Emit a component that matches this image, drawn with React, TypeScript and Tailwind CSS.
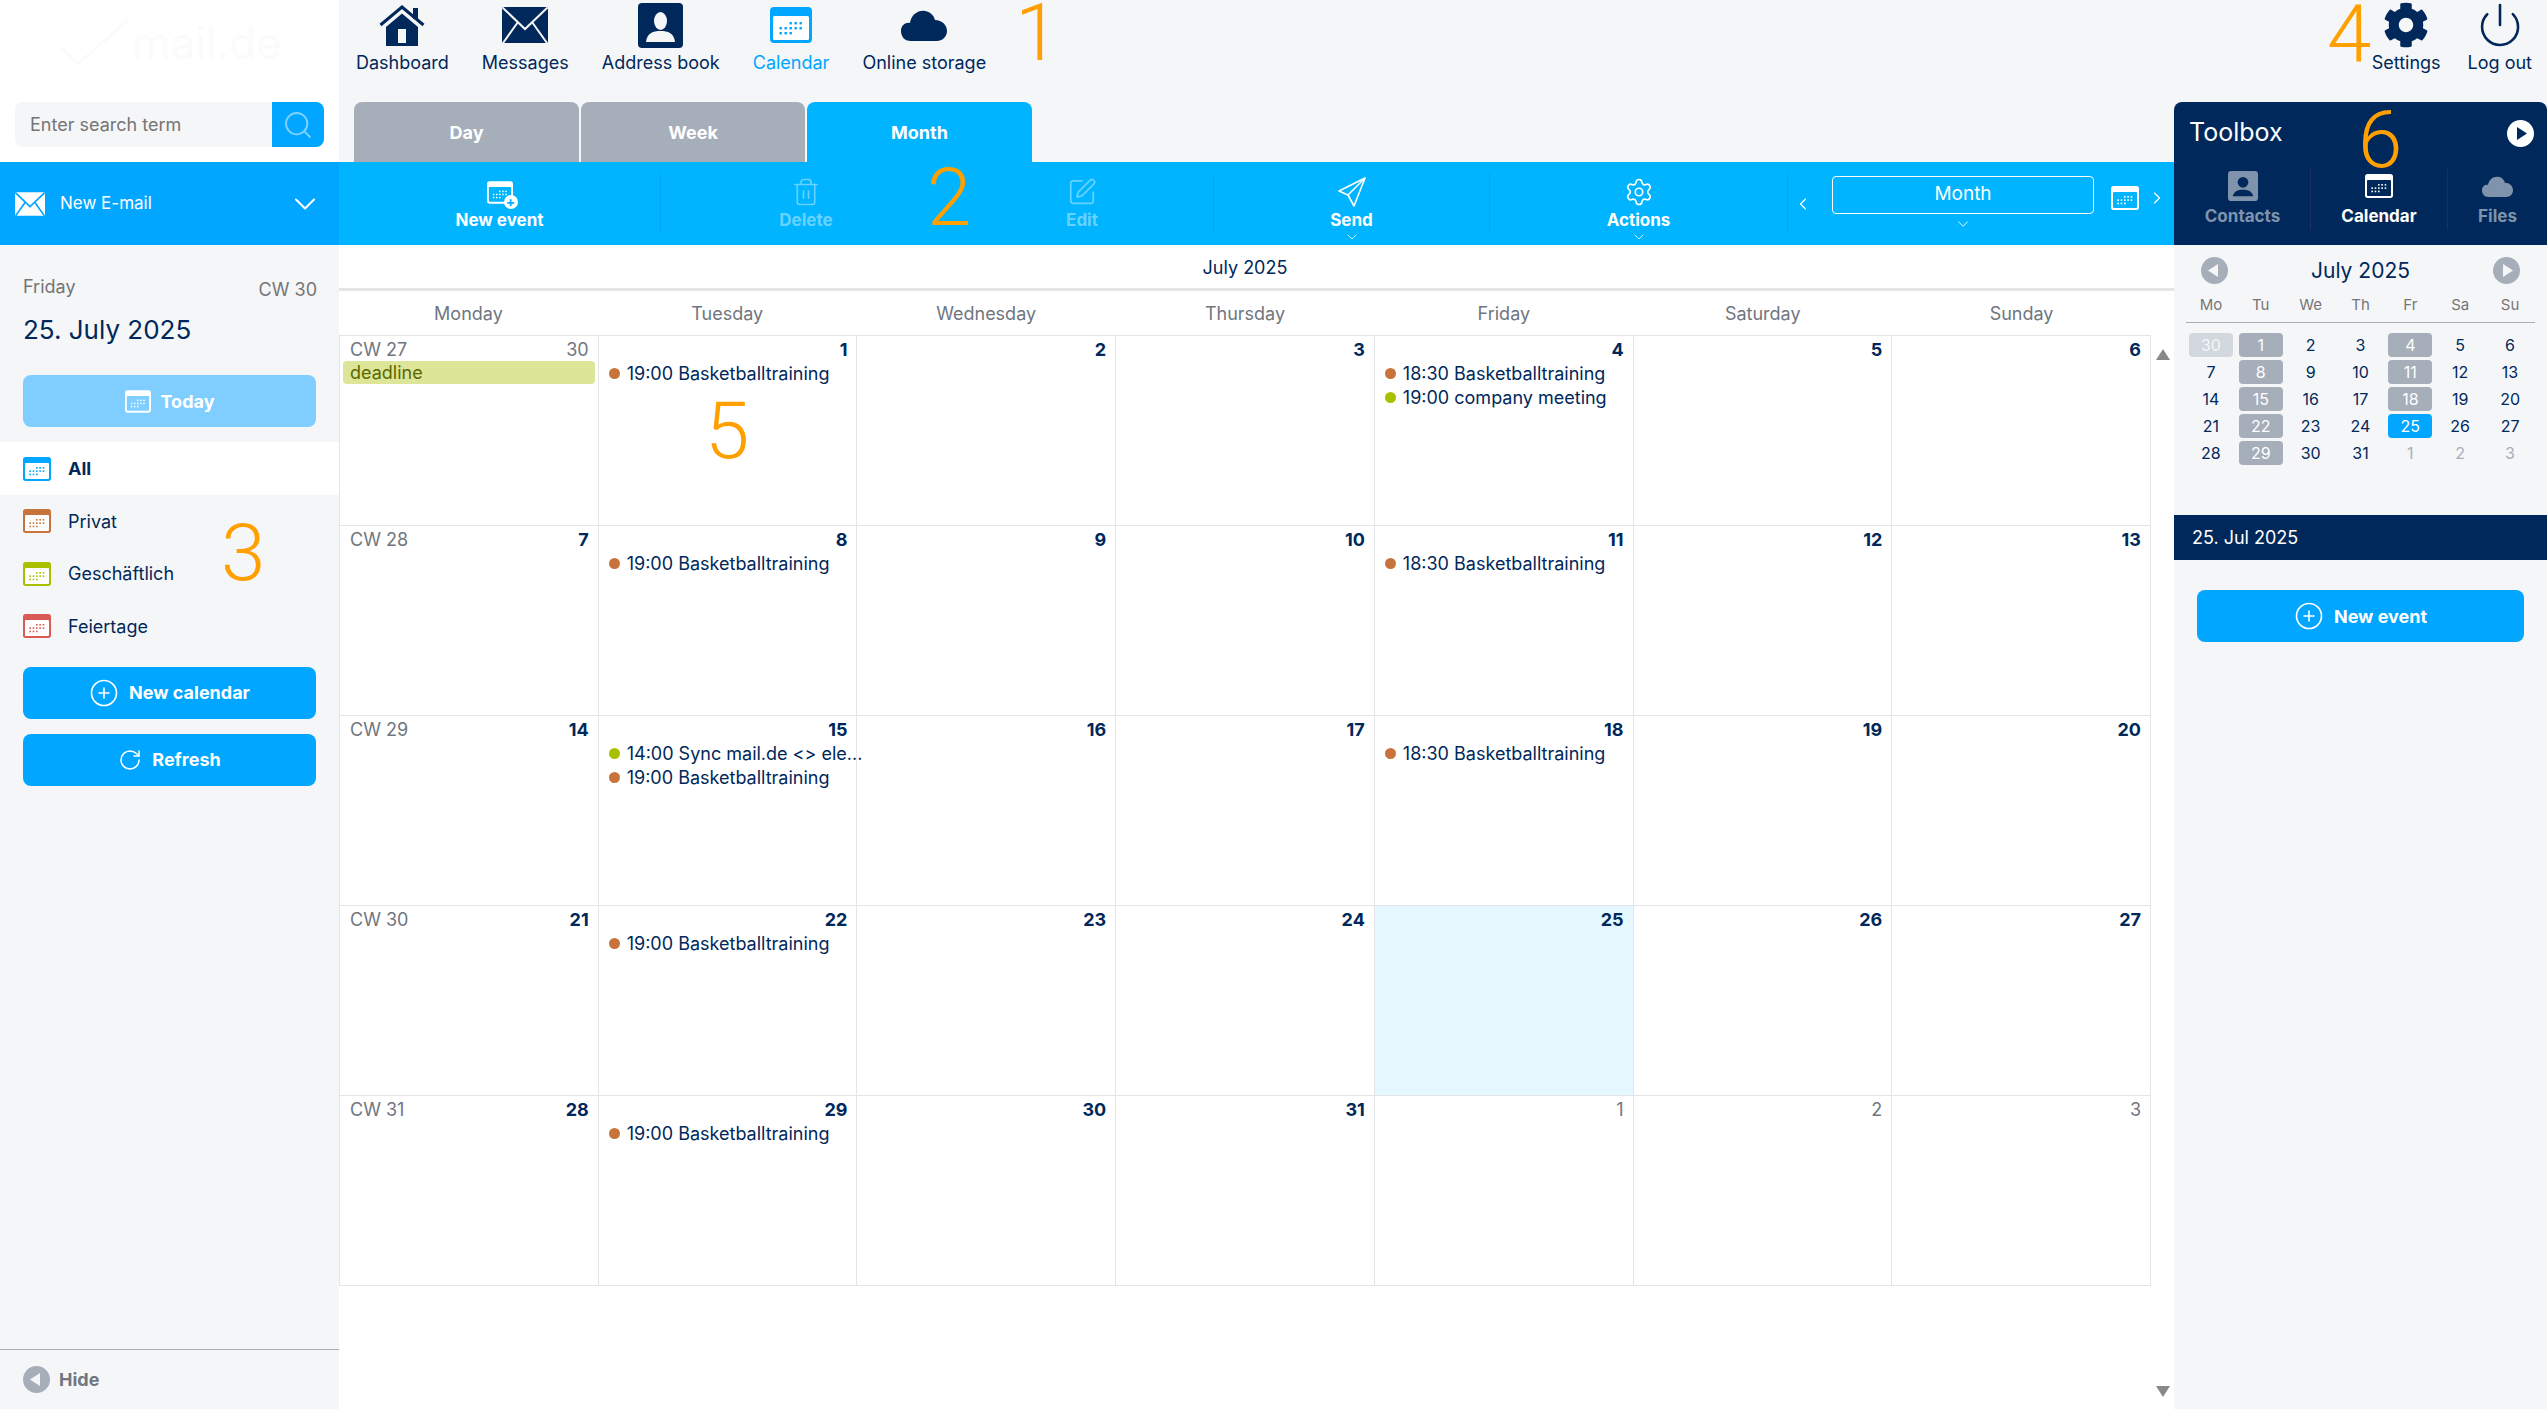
import { CirclePlus, ChevronDown, ChevronLeft, ChevronRight, Power, RotateCw, Search, Settings, SquarePen, Trash2 } from "lucide-react";
import { FaCog } from "react-icons/fa";

const NAVY = "#00285a";

type Ev = { time: string; color: string };
type Day = { n: number; muted?: boolean; cw?: number; today?: boolean; events?: Ev[]; deadline?: boolean };

const orange = "#c8733b";
const green = "#a8c000";

const basket = { time: "19:00 Basketballtraining", color: orange };
const basket2 = { time: "18:30 Basketballtraining", color: orange };

const days: Day[] = [
  { n: 30, muted: true, cw: 27, deadline: true },
  { n: 1, events: [basket] },
  { n: 2 },
  { n: 3 },
  { n: 4, events: [basket2, { time: "19:00 company meeting", color: green }] },
  { n: 5 },
  { n: 6 },
  { n: 7, cw: 28 },
  { n: 8, events: [basket] },
  { n: 9 },
  { n: 10 },
  { n: 11, events: [basket2] },
  { n: 12 },
  { n: 13 },
  { n: 14, cw: 29 },
  { n: 15, events: [{ time: "14:00 Sync mail.de <> ele...", color: green }, basket] },
  { n: 16 },
  { n: 17 },
  { n: 18, events: [basket2] },
  { n: 19 },
  { n: 20 },
  { n: 21, cw: 30 },
  { n: 22, events: [basket] },
  { n: 23 },
  { n: 24 },
  { n: 25, today: true },
  { n: 26 },
  { n: 27 },
  { n: 28, cw: 31 },
  { n: 29, events: [basket] },
  { n: 30 },
  { n: 31 },
  { n: 1, muted: true },
  { n: 2, muted: true },
  { n: 3, muted: true },
];

const weekdays = ["Monday", "Tuesday", "Wednesday", "Thursday", "Friday", "Saturday", "Sunday"];
const miniHeads = ["Mo", "Tu", "We", "Th", "Fr", "Sa", "Su"];
const miniDays = [30, 1, 2, 3, 4, 5, 6, 7, 8, 9, 10, 11, 12, 13, 14, 15, 16, 17, 18, 19, 20, 21, 22, 23, 24, 25, 26, 27, 28, 29, 30, 31, 1, 2, 3];
const busy = [1, 4, 8, 11, 15, 18, 22, 29];

function CalIcon({ w, h, outer, inner, dots }: { w: number; h: number; outer: string; inner: string; dots: string }) {
  const cells = [];
  for (let r = 0; r < 3; r++) {
    for (let c = 0; c < 5; c++) {
      if (r === 0 && c < 2) continue;
      if (r === 2 && c > 2) continue;
      cells.push(<rect key={r + "-" + c} x={9.5 + c * 5} y={15 + r * 5} width="2.4" height="2.4" fill={dots} />);
    }
  }
  return (
    <svg width={w} height={h} viewBox="0 0 42 36" className="shrink-0">
      <rect x="0" y="0" width="42" height="36" rx="4" fill={outer} />
      <rect x="3" y="9" width="36" height="24" rx="1.5" fill={inner} />
      {cells}
    </svg>
  );
}

function Mark({ children, className }: { children: string; className: string }) {
  return (
    <span className={"absolute font-['Roboto',sans-serif] font-light text-[80px] leading-none text-[#ffa000] pointer-events-none " + className}>
      {children}
    </span>
  );
}

function NavItem({ label, icon, active }: { label: string; icon: React.ReactNode; active?: boolean }) {
  return (
    <div className="flex flex-col items-center">
      <div className="h-[47px] pt-[3px] flex items-center justify-center">{icon}</div>
      <span className={"mt-[5px] text-[18px] leading-[22px] whitespace-nowrap " + (active ? "text-[#00a6ff]" : "text-[#00285a]")}>{label}</span>
    </div>
  );
}

function TopNav() {
  return (
    <div className="h-[102px] flex justify-between pl-[17px] pr-[15px]">
      <div className="flex gap-[33px]">
        <NavItem
          label="Dashboard"
          icon={
            <svg width="46" height="41" viewBox="0 0 46 41">
              <path d="M1.5 20 L23 2 L44.5 20" fill="none" stroke={NAVY} strokeWidth="3" />
              <rect x="34" y="3" width="5" height="11" fill={NAVY} />
              <path d="M7 22 L23 8.5 L39 22 V41 H7 Z" fill={NAVY} />
              <rect x="19" y="24" width="8" height="14" fill="#f5f6f8" />
            </svg>
          }
        />
        <NavItem
          label="Messages"
          icon={
            <svg width="46" height="36" viewBox="0 0 46 36">
              <rect width="46" height="36" rx="1.5" fill={NAVY} />
              <path d="M0.5 0.5 L23 22 L45.5 0.5" fill="none" stroke="#f5f6f8" strokeWidth="2" />
              <path d="M1 36 L16 15 M45 36 L30 15" stroke="#f5f6f8" strokeWidth="2" />
            </svg>
          }
        />
        <NavItem
          label="Address book"
          icon={
            <svg width="45" height="45" viewBox="0 0 45 45">
              <rect width="45" height="45" rx="4" fill={NAVY} />
              <ellipse cx="22.5" cy="18" rx="6.5" ry="9" fill="#f5f6f8" />
              <path d="M8 39 C9 30 15 28 22.5 28 C30 28 36 30 37 39 Z" fill="#f5f6f8" />
            </svg>
          }
        />
        <NavItem label="Calendar" active icon={<CalIcon w={42} h={40} outer="#00a6ff" inner="#ffffff" dots="#00a6ff" />} />
        <NavItem
          label="Online storage"
          icon={
            <svg width="46" height="31" viewBox="0 0 46 31">
              <path d="M10 31 C3 31 0 26 0 21 C0 15 5 12 9 13 C10 5 17 0 24 1 C30 2 33 6 34 10 C41 10 46 15 46 21 C46 27 41 31 36 31 Z" fill={NAVY} />
            </svg>
          }
        />
      </div>
      <div className="flex gap-[27px]">
        <NavItem label="Settings" icon={<FaCog size={46} color={NAVY} />} />
        <NavItem label="Log out" icon={<Power size={48} color={NAVY} strokeWidth={1.3} />} />
      </div>
    </div>
  );
}

function ToolButton({ label, icon, w, disabled, menu, sep }: { label: string; icon: React.ReactNode; w: string; disabled?: boolean; menu?: boolean; sep?: boolean }) {
  return (
    <div className={"h-full flex items-center " + w}>
      <div className={"flex-1 flex flex-col items-center pt-[15px] h-full " + (disabled ? "opacity-40" : "")}>
        <div className="h-[30px] flex items-center">{icon}</div>
        <span className="text-[17px] leading-[22px] mt-[2px] font-bold text-white">{label}</span>
        {menu && <ChevronDown size={18} color="#fff" strokeWidth={1.2} className="-mt-[2px]" />}
      </div>
      {sep && <div className="w-px h-[61px] bg-[#00a6ff]" />}
    </div>
  );
}

function Toolbar() {
  return (
    <div className="h-[83px] bg-[#00b4ff] flex items-center">
      <ToolButton
        label="New event"
        w="w-[322px]"
        sep
        icon={
          <div className="relative">
            <CalIcon w={26} h={25} outer="#ffffff" inner="#00b4ff" dots="#ffffff" />
            <span className="absolute -right-[5px] -bottom-[4px] w-[14px] h-[14px] rounded-full bg-white text-[#00b4ff] text-[14px] leading-[13px] text-center font-bold">+</span>
          </div>
        }
      />
      <ToolButton label="Delete" w="w-[290px]" disabled icon={<Trash2 size={30} color="#fff" strokeWidth={1.3} />} />
      <ToolButton label="Edit" w="w-[263px]" disabled sep icon={<SquarePen size={30} color="#fff" strokeWidth={1.4} />} />
      <ToolButton
        label="Send"
        w="w-[276px]"
        sep
        menu
        icon={
          <svg width="30" height="30" viewBox="0 0 30 30" fill="none" stroke="#fff" strokeWidth="1.6" strokeLinejoin="round">
            <path d="M28 1 L2 14 L11 18 L17 29 Z" />
            <path d="M28 1 L11 18" />
          </svg>
        }
      />
      <ToolButton label="Actions" w="w-[298px]" sep menu icon={<Settings size={30} color="#fff" strokeWidth={1.3} />} />
      <ChevronLeft size={20} color="#fff" strokeWidth={1.4} className="ml-[5px] mr-[19px]" />
      <div className="w-[262px] flex flex-col items-center pt-[1px]">
        <div className="w-full h-[38px] border border-white rounded-[4px] flex items-center justify-center text-white text-[19px]">Month</div>
        <ChevronDown size={18} color="#fff" strokeWidth={1.2} className="mt-[1px]" />
      </div>
      <div className="ml-[17px] -mt-[12px]">
        <CalIcon w={28} h={26} outer="#ffffff" inner="#00b4ff" dots="#ffffff" />
      </div>
      <ChevronRight size={20} color="#fff" strokeWidth={1.4} className="ml-[8px] -mt-[12px]" />
    </div>
  );
}

function Cell({ day }: { day: Day }) {
  return (
    <div className={"h-[190px] border-l border-t border-[#e3e5e8] px-[9px] pt-[2px] " + (day.today ? "bg-[#e5f7ff]" : "")}>
      <div className="flex justify-between h-[23px] leading-[23px] text-[18px]">
        <span className="text-[#6f7680] pl-[1px]">{day.cw ? "CW " + day.cw : ""}</span>
        <span className={day.muted ? "text-[#6f7680]" : "text-[#00285a] font-bold"}>{day.n}</span>
      </div>
      {day.deadline && (
        <div className="-mx-[6px] h-[23px] leading-[23px] rounded-[4px] bg-[#dde599] px-[7px] text-[18px] text-[#5a6a00]">deadline</div>
      )}
      {day.events?.map((e) => (
        <div key={e.time} className="flex items-center h-[24px] pl-[1px] gap-[7px] text-[18px] text-[#00285a] whitespace-nowrap">
          <span className="w-[11px] h-[11px] rounded-full shrink-0" style={{ backgroundColor: e.color }} />
          {e.time}
        </div>
      ))}
    </div>
  );
}

function CalendarGrid() {
  return (
    <div className="flex-1 bg-white flex flex-col min-h-0">
      <div className="h-[43px] w-[1812px] flex items-center justify-center text-[18px] text-[#00285a] pt-[1px]">July 2025</div>
      <div className="h-[3px] bg-[#e5e5e5]" />
      <div className="h-[44px] w-[1812px] grid grid-cols-7 items-center text-center text-[18px] text-[#6f7680]">
        {weekdays.map((d) => (
          <span key={d}>{d}</span>
        ))}
      </div>
      <div className="flex-1 flex min-h-0">
        <div className="w-[1812px] h-[951px] grid grid-cols-7 border-r border-b border-[#e3e5e8]">
          {days.map((d, i) => (
            <Cell key={i} day={d} />
          ))}
        </div>
        <div className="flex-1 flex flex-col items-center justify-between pt-[14px] pb-[12px]">
          <span className="w-0 h-0 border-x-[7px] border-x-transparent border-b-[11px] border-b-[#888888]" />
          <span className="w-0 h-0 border-x-[7px] border-x-transparent border-t-[11px] border-t-[#888888]" />
        </div>
      </div>
    </div>
  );
}

function BlueButton({ label, icon, light }: { label: string; icon: React.ReactNode; light?: boolean }) {
  return (
    <div className={"h-[52px] rounded-[8px] flex items-center justify-center gap-[10px] text-white font-bold text-[18px] " + (light ? "bg-[#80ceff]" : "bg-[#00a6ff]")}>
      {icon}
      {label}
    </div>
  );
}

function CalendarRow({ label, color, active }: { label: string; color: string; active?: boolean }) {
  return (
    <div className={"flex items-center pl-[23px] gap-[17px] text-[18px] text-[#00285a] " + (active ? "h-[53px] bg-white font-bold" : "h-[52.5px]")}>
      <CalIcon w={28} h={26} outer={color} inner="#ffffff" dots={color} />
      {label}
    </div>
  );
}

function Sidebar() {
  return (
    <aside className="w-[339px] shrink-0 flex flex-col h-full">
      <div className="h-[162px] bg-white">
        <div className="h-[102px] pl-[60px] pt-[18px] flex items-start gap-[2px] text-[#fbfbfb]">
          <svg width="70" height="50" viewBox="0 0 70 50" fill="none" stroke="#fbfbfb" strokeWidth="3">
            <path d="M2 30 L18 46 L68 2" />
          </svg>
          <span className="text-[44px] leading-[50px]">mail.de</span>
        </div>
        <div className="mx-[15px] h-[45px] flex rounded-[8px] overflow-hidden bg-[#f5f6f8]">
          <span className="flex-1 pl-[15px] flex items-center text-[18px] text-[#757575]">Enter search term</span>
          <div className="w-[52px] bg-[#00a6ff] flex items-center justify-center">
            <Search size={32} color="#7fd2ff" strokeWidth={1.4} />
          </div>
        </div>
      </div>
      <div className="h-[83px] bg-[#00a6ff] flex items-center pl-[15px] pr-[16px] text-white text-[17px]">
        <svg width="30" height="24" viewBox="0 0 46 36" className="mr-[15px]">
          <rect width="46" height="36" rx="1.5" fill="#fff" />
          <path d="M0.5 0.5 L23 22 L45.5 0.5" fill="none" stroke="#00a6ff" strokeWidth="2.5" />
          <path d="M1 36 L16 15 M45 36 L30 15" stroke="#00a6ff" strokeWidth="2.5" />
        </svg>
        <span className="flex-1">New E-mail</span>
        <ChevronDown size={36} color="#fff" strokeWidth={1.4} />
      </div>
      <div className="flex-1 bg-[#f5f6f8] flex flex-col min-h-0">
        <div className="px-[23px] pt-[29px]">
          <div className="flex justify-between text-[18px] text-[#757575] leading-[26px]">
            <span>Friday</span>
            <span className="pt-[3px] -mr-[1px]">CW 30</span>
          </div>
          <div className="text-[26px] text-[#00285a] leading-[34px] mt-[10px]">25. July 2025</div>
          <div className="mt-[28px]">
            <BlueButton label="Today" light icon={<CalIcon w={26} h={23} outer="#ffffff" inner="#80ceff" dots="#ffffff" />} />
          </div>
        </div>
        <div className="mt-[15px]">
          <CalendarRow label="All" color="#00a6ff" active />
          <CalendarRow label="Privat" color="#c8733b" />
          <CalendarRow label="Geschäftlich" color="#a8c000" />
          <CalendarRow label="Feiertage" color="#da5a55" />
        </div>
        <div className="px-[23px] mt-[14px] flex flex-col gap-[15px]">
          <BlueButton label="New calendar" icon={<CirclePlus size={30} strokeWidth={1.3} />} />
          <BlueButton label="Refresh" icon={<RotateCw size={24} strokeWidth={1.5} />} />
        </div>
        <div className="mt-auto h-[60px] border-t border-[#a6aeba] flex items-center pl-[23px] gap-[9px] text-[18px] font-bold text-[#6f7680]">
          <RoundArrow dir="left" bg="#a6aeba" fg="#f5f6f8" />
          Hide
        </div>
      </div>
    </aside>
  );
}

function RoundArrow({ dir, bg, fg }: { dir: "left" | "right"; bg: string; fg: string }) {
  return (
    <svg width="27" height="27" viewBox="0 0 27 27">
      <circle cx="13.5" cy="13.5" r="13.5" fill={bg} />
      <path d={dir === "left" ? "M7 13.5 L17 7 V20 Z" : "M20 13.5 L10 7 V20 Z"} fill={fg} />
    </svg>
  );
}

function ToolTab({ label, active, sep, icon, w }: { label: string; active?: boolean; sep?: boolean; icon: React.ReactNode; w: string }) {
  return (
    <div className={"h-full flex items-center " + w}>
      <div className="flex-1 flex flex-col items-center">
        <div className="h-[30px] flex items-center">{icon}</div>
        <span className={"text-[17px] leading-[22px] mt-[4px] font-bold " + (active ? "text-white" : "text-[#7f93ad]")}>{label}</span>
      </div>
      {sep && <div className="w-px h-[61px] bg-[#1c2f60]" />}
    </div>
  );
}

function Toolbox() {
  return (
    <aside className="w-[373px] shrink-0 bg-[#f5f6f8] flex flex-col">
      <div className="h-[143px] bg-[#00285a] rounded-t-[8px] flex flex-col">
        <div className="h-[61px] flex items-center justify-between pl-[15px] pr-[13px] pt-[1px]">
          <span className="text-[25px] text-white">Toolbox</span>
          <RoundArrowWhite />
        </div>
        <div className="flex items-center h-[72px] pl-[1px]">
          <ToolTab
            label="Contacts"
            w="w-[136px]"
            sep
            icon={
              <svg width="30" height="30" viewBox="0 0 45 45">
                <rect width="45" height="45" rx="5" fill="#7f93ad" />
                <circle cx="22.5" cy="17" r="8" fill={NAVY} />
                <path d="M7 38 C9 30 15 28 22.5 28 C30 28 36 30 38 38 Z" fill={NAVY} />
              </svg>
            }
          />
          <ToolTab label="Calendar" active w="w-[137px]" sep icon={<CalIcon w={28} h={26} outer="#ffffff" inner={NAVY} dots="#ffffff" />} />
          <ToolTab
            label="Files"
            w="w-[99px]"
            icon={
              <svg width="31" height="21" viewBox="0 0 46 31">
                <path d="M10 31 C3 31 0 26 0 21 C0 15 5 12 9 13 C10 5 17 0 24 1 C30 2 33 6 34 10 C41 10 46 15 46 21 C46 27 41 31 36 31 Z" fill="#7f93ad" />
              </svg>
            }
          />
        </div>
      </div>
      <div className="h-[270px] px-[12px] pt-[12px]">
        <div className="flex items-center justify-between px-[15px] h-[27px]">
          <RoundArrow dir="left" bg="#a6aeba" fg="#f5f6f8" />
          <span className="text-[21px] text-[#00285a]">July 2025</span>
          <RoundArrow dir="right" bg="#a6aeba" fg="#f5f6f8" />
        </div>
        <div className="grid grid-cols-7 mt-[9px] h-[30px] items-center text-center text-[15px] text-[#757575] border-b border-[#a6aeba] pb-[5px]">
          {miniHeads.map((d) => (
            <span key={d}>{d}</span>
          ))}
        </div>
        <div className="grid grid-cols-7 mt-[8px]">
          {miniDays.map((n, i) => {
            const out = i === 0 || i > 31;
            const pill = i === 0 ? "bg-[#d3d7de] text-[#f5f6f8]" : out ? "text-[#a6aeba]" : n === 25 ? "bg-[#00a6ff] text-white" : busy.includes(n) ? "bg-[#a6aeba] text-white" : "text-[#00285a]";
            return (
              <div key={i} className="h-[27px] flex items-center justify-center">
                <span className={"w-[44px] h-[24px] rounded-[4px] flex items-center justify-center text-[16px] " + pill}>{n}</span>
              </div>
            );
          })}
        </div>
      </div>
      <div className="h-[45px] bg-[#00285a] flex items-center pl-[18px] text-[18px] text-white">25. Jul 2025</div>
      <div className="px-[23px] pt-[30px]">
        <BlueButton label="New event" icon={<CirclePlus size={30} strokeWidth={1.3} />} />
      </div>
    </aside>
  );
}

function RoundArrowWhite() {
  return <RoundArrow dir="right" bg="#ffffff" fg="#00285a" />;
}

export default function App() {
  return (
    <div className="relative w-[2547px] h-[1409px] overflow-hidden flex bg-[#f5f6f8] font-['Inter',sans-serif]">
      <Sidebar />
      <div className="flex-1 flex flex-col min-w-0">
        <TopNav />
        <div className="flex-1 flex min-h-0">
          <main className="flex-1 flex flex-col min-w-0">
            <div className="h-[60px] flex gap-[2px] pl-[15px]">
              <div className="w-[225px] rounded-t-[8px] bg-[#a6aeba] flex items-center justify-center text-white font-bold text-[18px]">Day</div>
              <div className="w-[224px] rounded-t-[8px] bg-[#a6aeba] flex items-center justify-center text-white font-bold text-[18px]">Week</div>
              <div className="w-[225px] rounded-t-[8px] bg-[#00b4ff] flex items-center justify-center text-white font-bold text-[18px]">Month</div>
            </div>
            <Toolbar />
            <CalendarGrid />
          </main>
          <Toolbox />
        </div>
      </div>
      <Mark className="left-[1015px] top-[-7px]">1</Mark>
      <Mark className="left-[927px] top-[158px]">2</Mark>
      <Mark className="left-[221px] top-[513px]">3</Mark>
      <Mark className="left-[2327px] top-[-6px]">4</Mark>
      <Mark className="left-[705px] top-[391px]">5</Mark>
      <Mark className="left-[2358px] top-[100px]">6</Mark>
    </div>
  );
}
